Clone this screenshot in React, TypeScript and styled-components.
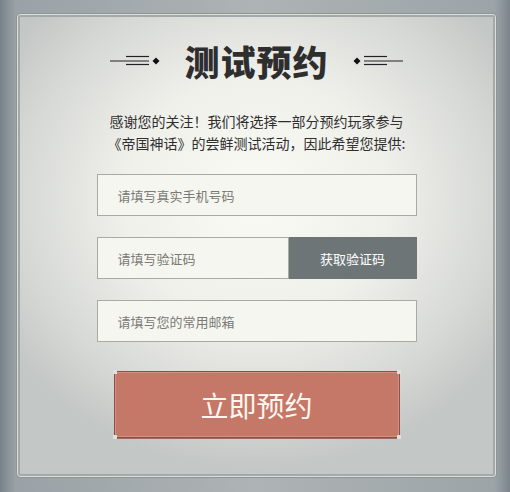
import React from "react";
import styled, { createGlobalStyle } from "styled-components";

const GlobalStyle = createGlobalStyle`
  html, body {
    margin: 0;
    padding: 0;
  }
  body {
    font-family: "Noto Sans CJK SC", "Noto Sans", sans-serif;
  }
`;

const Frame = styled.div`
  width: 510px;
  height: 492px;
  box-sizing: border-box;
  padding: 13px 13px 14px 16px;
  background: linear-gradient(90deg, #77828a 0%, #9aa2a7 3%, #aeb3b4 50%, #9ca4a8 97%, #7b858b 100%);
`;

const Panel = styled.div`
  width: 481px;
  height: 465px;
  box-sizing: border-box;
  border: 1px solid #8d9595;
  border-radius: 4px;
  box-shadow: inset 0 0 0 1px #dcdedb, inset 0 0 0 3px #a3a9a8;
  background: radial-gradient(ellipse 62% 58% at 50% 40%, #fbfbf6 0%, #f0f0eb 45%, #d6d8d5 80%, #c3c7c5 100%);
  display: flex;
  flex-direction: column;
  align-items: center;
  padding-top: 26px;
`;

const TitleRow = styled.div`
  display: flex;
  align-items: center;
  gap: 24px;
`;

const Title = styled.h1`
  margin: 0;
  font-family: "Noto Sans CJK SC", sans-serif;
  font-weight: 900;
  font-size: 35px;
  line-height: 42px;
  color: #2e2e2e;
  letter-spacing: 1px;
`;

const Ornament = styled.svg<{ $flip?: boolean }>`
  display: block;
  transform: ${(p) => (p.$flip ? "scaleX(-1)" : "none")};
`;

const Intro = styled.p`
  margin: 28px 0 0;
  width: 310px;
  font-size: 14px;
  line-height: 22px;
  color: #2f2f2f;
  text-align: center;
  white-space: nowrap;
`;

const Form = styled.div`
  margin-top: 20px;
  width: 320px;
  display: flex;
  flex-direction: column;
  gap: 21px;
`;

const Row = styled.div`
  display: flex;
  height: 42px;
`;

const Field = styled.input`
  flex: 1;
  min-width: 0;
  height: 42px;
  box-sizing: border-box;
  border: 1px solid #aaaaa2;
  background: #f6f6f0;
  padding: 0 0 0 20px;
  font-family: "Noto Sans CJK SC", sans-serif;
  font-size: 13px;
  color: #333;
  outline: none;
  &::placeholder {
    color: #7a7a76;
  }
`;

const CodeButton = styled.button`
  width: 128px;
  height: 42px;
  border: none;
  background: #6e7577;
  color: #ffffff;
  font-family: "Noto Sans CJK SC", sans-serif;
  font-size: 13px;
  cursor: pointer;
`;

const Submit = styled.button`
  position: relative;
  margin-top: 29px;
  width: 286px;
  height: 67px;
  border: 1px solid #8b4f45;
  box-shadow: inset 0 0 0 1px #d4917f, 0 1px 0 #9d6a62;
  background: #c67868;
  color: #fff8f2;
  font-family: "Noto Sans CJK SC", sans-serif;
  font-size: 28px;
  cursor: pointer;
`;

const Corner = styled.span<{ $pos: string }>`
  position: absolute;
  width: 4px;
  height: 4px;
  background: #e2e0dc;
  ${(p) => p.$pos}
`;

const Decor = ({ flip }: { flip?: boolean }) => (
  <Ornament $flip={flip} width="51" height="14" viewBox="0 0 51 14">
    <line x1="17" y1="2.5" x2="40" y2="2.5" stroke="#222" strokeWidth="1.2" />
    <line x1="1" y1="7" x2="40" y2="7" stroke="#222" strokeWidth="1.2" />
    <line x1="17" y1="10.5" x2="40" y2="10.5" stroke="#222" strokeWidth="1.2" />
    <polygon points="47,3.5 50.5,7 47,10.5 43.5,7" fill="#111" />
  </Ornament>
);

export default function App() {
  return (
    <>
      <GlobalStyle />
      <Frame>
        <Panel>
          <TitleRow>
            <Decor />
            <Title>测试预约</Title>
            <Decor flip />
          </TitleRow>
          <Intro>
            感谢您的关注！我们将选择一部分预约玩家参与
            <br />
            《帝国神话》的尝鲜测试活动，因此希望您提供:
          </Intro>
          <Form>
            <Row>
              <Field placeholder="请填写真实手机号码" />
            </Row>
            <Row>
              <Field placeholder="请填写验证码" />
              <CodeButton>获取验证码</CodeButton>
            </Row>
            <Row>
              <Field placeholder="请填写您的常用邮箱" />
            </Row>
          </Form>
          <Submit>
            立即预约
            <Corner $pos="top: -2px; left: -2px;" />
            <Corner $pos="top: -2px; right: -2px;" />
            <Corner $pos="bottom: -2px; left: -2px;" />
            <Corner $pos="bottom: -2px; right: -2px;" />
          </Submit>
        </Panel>
      </Frame>
    </>
  );
}
